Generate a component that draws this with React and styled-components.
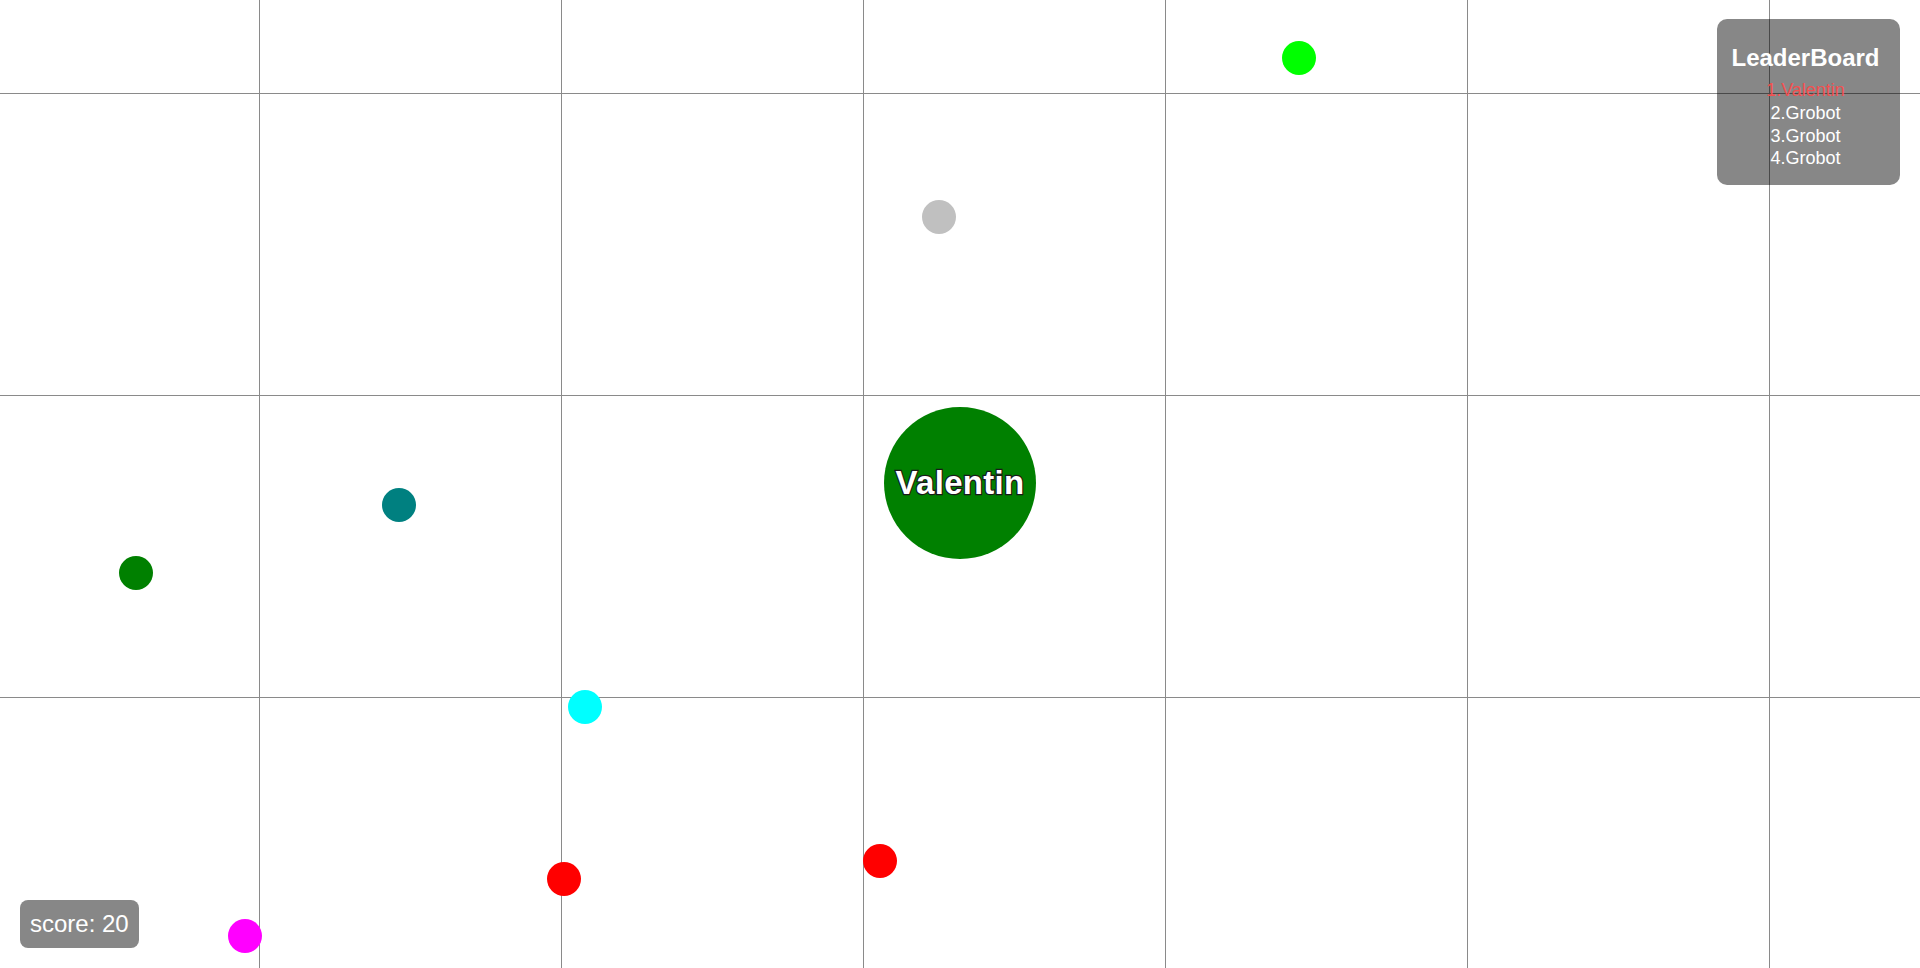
import React from "react";
import styled, { createGlobalStyle } from "styled-components";

const GlobalStyle = createGlobalStyle`
  html, body {
    margin: 0;
    padding: 0;
    overflow: hidden;
    background: #fff;
    font-family: "Liberation Sans", Arial, sans-serif;
  }
`

const GRID = 302;

export const Arena = styled.div`
  position: relative;
  width: 1920px;
  height: 968px;
  overflow: hidden;
  background-color: #fff;
  background-image:
    linear-gradient(to right, #8a8a8a 0, #8a8a8a 1.5px, transparent 1.5px),
    linear-gradient(to bottom, #8a8a8a 0, #8a8a8a 1.5px, transparent 1.5px);
  background-size: ${GRID}px ${GRID}px;
  background-position: 259px 93px;
`

export const Blob = styled.div`
  position: absolute;
  left: ${(p) => p.$x - p.$r}px;
  top: ${(p) => p.$y - p.$r}px;
  width: ${(p) => p.$r * 2}px;
  height: ${(p) => p.$r * 2}px;
  border-radius: 50%;
  background: ${(p) => p.$color};
  display: flex;
  align-items: center;
  justify-content: center;
`

export const PlayerName = styled.span`
  font-family: "Liberation Sans", Arial, sans-serif;
  font-weight: bold;
  font-size: 33px;
  color: #fff;
  -webkit-text-stroke: 2.4px #1a1a1a;
  paint-order: stroke fill;
  letter-spacing: 0.3px;
`

export const LeaderBoard = styled.div`
  position: absolute;
  top: 19px;
  right: 20px;
  width: 183px;
  height: 166px;
  box-sizing: border-box;
  padding: 24px 6px 0 0;
  border-radius: 10px;
  background: rgba(0, 0, 0, 0.47);
  color: #fff;
  text-align: center;
`

export const BoardTitle = styled.div`
  font-weight: bold;
  font-size: 24px;
  line-height: 29px;
  margin-bottom: 7px;
`

export const BoardRow = styled.div`
  font-size: 18px;
  line-height: 22.8px;
  color: ${(p) => (p.$me ? "#f25050" : "#fff")};
`

export const Score = styled.div`
  position: absolute;
  left: 20px;
  bottom: 20px;
  height: 48px;
  padding: 0 10px;
  border-radius: 8px;
  background: rgba(0, 0, 0, 0.47);
  color: #fff;
  font-size: 24px;
  display: flex;
  align-items: center;
`

const food = [
  { x: 1299, y: 57.5, color: "#00ff00" },
  { x: 938.5, y: 217, color: "#c0c0c0" },
  { x: 398.5, y: 505, color: "#008080" },
  { x: 135.5, y: 573, color: "#008000" },
  { x: 585, y: 707, color: "#00ffff" },
  { x: 563.5, y: 879, color: "#ff0000" },
  { x: 880, y: 860.5, color: "#ff0000" },
  { x: 245, y: 935.5, color: "#ff00ff" },
];

const leaders = ["Valentin", "Grobot", "Grobot", "Grobot"];

export default function App() {
  return (
    <>
      <GlobalStyle />
      <Arena>
        {food.map((f, i) => (
          <Blob key={i} $x={f.x} $y={f.y} $r={17} $color={f.color} />
        ))}
        <Blob $x={960} $y={483} $r={76} $color="#008000">
          <PlayerName>Valentin</PlayerName>
        </Blob>
        <LeaderBoard>
          <BoardTitle>LeaderBoard</BoardTitle>
          {leaders.map((name, i) => (
            <BoardRow key={i} $me={i === 0}>
              {i + 1}.{name}
            </BoardRow>
          ))}
        </LeaderBoard>
        <Score>score: 20</Score>
      </Arena>
    </>
  );
}
